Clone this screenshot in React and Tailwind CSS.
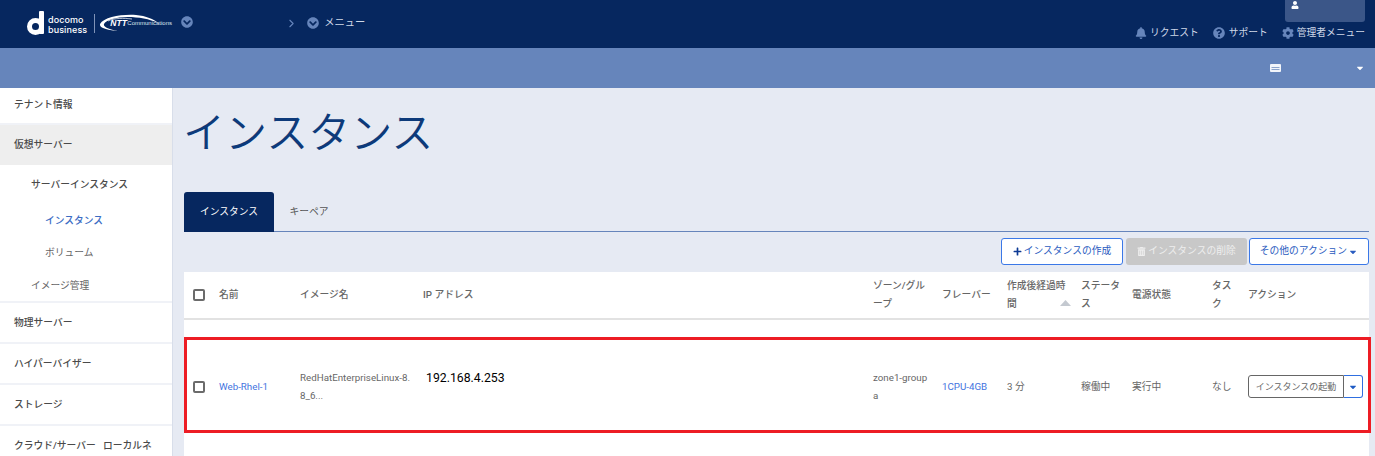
import React from 'react';
import { FaBell, FaCaretDown, FaChevronCircleDown, FaCog, FaPlus, FaQuestionCircle, FaTrashAlt, FaUser } from 'react-icons/fa';
import { FiChevronRight } from 'react-icons/fi';

const Checkbox = () => <span className="block w-[12px] h-[12px] border-2 border-[#6b6b6b] rounded-[2px] bg-white" />;

const Logo = () => (
    <div className="flex items-center">
        <svg width="17" height="24" viewBox="0 0 17 24" className="mr-[3px]">
            <circle cx="8.5" cy="15.5" r="6" fill="none" stroke="#fff" strokeWidth="5" />
            <rect x="12" y="0" width="5" height="23" rx="1" fill="#fff" />
        </svg>
        <div className="flex flex-col text-white text-[9px] font-medium leading-[10px] tracking-[0.1px] font-['Inter',sans-serif] mt-[3px] ml-[1px]">
            <span>docomo</span>
            <span>business</span>
        </div>
        <div className="w-px h-[19px] bg-[#7f93b8] ml-[7px] mr-[5px]" />
        <div className="relative w-[68px] h-[18px]">
            <svg width="68" height="18" viewBox="0 0 68 18" className="absolute inset-0">
                <path d="M0 10C4 3 22 0 36 1C46 2 54 5 58 9C50 5 38 3 28 3C16 3 6 6 4 10C3 13 9 15 18 17C8 16 -1 14 0 10Z" fill="#fff" />
                <path d="M8 7C14 4 24 4 32 5" fill="none" stroke="#fff" strokeWidth="0.7" />
            </svg>
            <span className="absolute left-[10px] top-[4px] text-white text-[8.5px] leading-[10px] font-black italic font-['Liberation_Sans',sans-serif]">NTT</span>
            <span className="absolute left-[27px] top-[5px] text-[#dfe5f0] text-[6px] leading-[9px] font-['Liberation_Sans',sans-serif]">Communications</span>
        </div>
    </div>
);

const Header = () => (
    <header className="h-[48px] bg-[#06275f] flex justify-between pl-[27px] pr-[10px] shrink-0">
        <div className="flex items-start">
            <div className="mt-[11px]"><Logo /></div>
            <FaChevronCircleDown size={12} className="text-[#6685bb] ml-[13px] mt-[16px]" />
            <FiChevronRight size={13} className="text-[#6685bb] ml-[92px] mt-[17px]" />
            <FaChevronCircleDown size={12} className="text-[#6685bb] ml-[9px] mt-[17px]" />
            <span className="text-[10.25px] text-[#cfd8e8] ml-[5px] mt-[15px] leading-[16px]">メニュー</span>
        </div>
        <div className="flex flex-col items-end">
            <div className="w-[80px] h-[22px] bg-[#3b5688] rounded-b-[3px] pl-[6px] pt-[1px]">
                <FaUser size={8} className="text-white" />
            </div>
            <div className="flex items-center mt-[4px] h-[14px] text-[9.75px] text-[#cfd8e8]">
                <FaBell size={12} className="text-[#6685bb] mr-[3px]" />
                <span>リクエスト</span>
                <FaQuestionCircle size={12} className="text-[#6685bb] ml-[14px] mr-[4px]" />
                <span>サポート</span>
                <FaCog size={12} className="text-[#6685bb] ml-[14px] mr-[3px]" />
                <span>管理者メニュー</span>
            </div>
        </div>
    </header>
);

const SubBar = () => (
    <div className="h-[40px] bg-[#6685bb] flex items-center justify-end pr-[10px] shrink-0">
        <svg width="11" height="8" viewBox="0 0 11 8" className="mr-[74px]">
            <rect width="11" height="8" rx="1" fill="#f2f5fa" />
            <rect x="1.5" y="3" width="8" height="1" fill="#8ba3cb" />
            <rect x="1.5" y="5" width="8" height="1" fill="#8ba3cb" />
        </svg>
        <FaCaretDown size={10} className="text-white" />
    </div>
);

const Sidebar = () => (
    <aside className="w-[173px] bg-white border-r border-[#d8deea] shrink-0 text-[9.75px] text-[#4a4a4a] font-medium">
        <div className="h-[37px] pl-[14px] pt-[9px] leading-[16px] border-b-2 border-[#f0f2f7]">テナント情報</div>
        <div className="h-[40px] pl-[14px] pt-[1px] flex items-center bg-[#eeeeee]">仮想サーバー</div>
        <div className="h-[40px] pl-[31px] pt-[1px] flex items-center">サーバーインスタンス</div>
        <div className="h-[30px] pl-[45px] pt-[2px] flex items-center text-[#3b6cc4]">インスタンス</div>
        <div className="h-[36px] pl-[45px] pt-[1px] flex items-center font-normal text-[#666]">ボリューム</div>
        <div className="h-[30px] pl-[31px] flex items-center font-normal text-[#666]">イメージ管理</div>
        <div className="h-[41px] pl-[14px] pt-[2px] flex items-center border-t-2 border-[#f0f2f7]">物理サーバー</div>
        <div className="h-[41px] pl-[14px] pt-[2px] flex items-center border-t-2 border-[#f0f2f7]">ハイパーバイザー</div>
        <div className="h-[41px] pl-[14px] pt-[1px] flex items-center border-t-2 border-[#f0f2f7]">ストレージ</div>
        <div className="h-[41px] pl-[14px] pt-[2px] flex items-center border-t-2 border-[#f0f2f7] whitespace-nowrap">クラウド/サーバー&nbsp;&nbsp;&nbsp;ローカルネ</div>
    </aside>
);

const th = 'text-left font-medium align-middle p-0 pr-[8px] leading-[18px]';
const td = 'align-middle p-0 leading-[18px] pt-[4px]';

const InstanceTable = () => (
    <div className="relative mt-[7px] bg-white h-[200px]">
        <table className="w-full table-fixed border-collapse text-[9.75px] text-[#666]">
            <colgroup>
                <col className="w-[35px]" />
                <col className="w-[81px]" />
                <col className="w-[123px]" />
                <col className="w-[450px]" />
                <col className="w-[69px]" />
                <col className="w-[65px]" />
                <col className="w-[74px]" />
                <col className="w-[51px]" />
                <col className="w-[80px]" />
                <col className="w-[36px]" />
                <col className="w-[121px]" />
            </colgroup>
            <thead>
                <tr className="h-[47px] border-b-2 border-[#e2e2e2]">
                    <th className={th}><div className="pl-[9px]"><Checkbox /></div></th>
                    <th className={th}>名前</th>
                    <th className={th}>イメージ名</th>
                    <th className={th}>IP アドレス</th>
                    <th className={th}>ゾーン/グループ</th>
                    <th className={th}>フレーバー</th>
                    <th className={th}>
                        <div className="relative">
                            作成後経過時間
                            <svg width="11" height="6" viewBox="0 0 11 6" className="absolute right-[2px] bottom-[7px]">
                                <path d="M5.5 0L11 6H0Z" fill="#c4c9d0" />
                            </svg>
                        </div>
                    </th>
                    <th className={th}>ステータス</th>
                    <th className={th}>電源状態</th>
                    <th className={th}>タスク</th>
                    <th className={th}>アクション</th>
                </tr>
            </thead>
            <tbody>
                <tr className="h-[130px]">
                    <td className={td}><div className="pl-[9px]"><Checkbox /></div></td>
                    <td className={`${td} text-[#3f74e0]`}>Web-Rhel-1</td>
                    <td className={td}><div className="break-all pr-[12px]">RedHatEnterpriseLinux-8.8_6...</div></td>
                    <td className={`${td} pl-[3px]`}><div className="text-[12.25px] text-black -mt-[18px]">192.168.4.253</div></td>
                    <td className={td}><div className="break-all pr-[12px]">zone1-group a</div></td>
                    <td className={`${td} text-[#3f74e0]`}>1CPU-4GB</td>
                    <td className={td}>3 分</td>
                    <td className={td}>稼働中</td>
                    <td className={td}>実行中</td>
                    <td className={td}>なし</td>
                    <td className={td}>
                        <div className="flex h-[23px] w-[115px]">
                            <button className="w-[96px] border border-[#666] rounded-l-[3px] text-[#666] text-[9px] whitespace-nowrap">インスタンスの起動</button>
                            <button className="w-[19px] border border-l-0 border-[#2f6fe0] rounded-r-[3px] flex items-center justify-center">
                                <FaCaretDown size={10} className="text-[#1f5bc4]" />
                            </button>
                        </div>
                    </td>
                </tr>
            </tbody>
        </table>
        {/* 赤枠 */}
        <div className="absolute left-0 top-[65px] w-[1187px] h-[96px] border-[3px] border-[#ed1c24] pointer-events-none" />
    </div>
);

const Content = () => (
    <main className="flex-1 min-w-0 bg-[#e6eaf3] pl-[11px] pr-[6px]">
        <h1 className="text-[42px] font-[350] text-[#0d3a7a] leading-[48px] mt-[22px] -mb-[1px] -ml-[1px]">インスタンス</h1>
        <div className="mt-[35px] h-[40px] flex border-b border-[#6685bb] text-[9.75px]">
            <div className="w-[90px] h-[40px] pt-[1px] bg-[#06275f] text-white rounded-t-[3px] flex items-center justify-center">インスタンス</div>
            <div className="w-[70px] pt-[1px] flex items-center justify-center text-[#555]">キーペア</div>
        </div>
        <div className="mt-[6px] flex justify-end gap-[2px] text-[9.75px] h-[27px]">
            <button className="w-[122px] mr-[1px] border border-[#3b78e7] rounded-[3px] bg-white text-[#2a5cc0] flex items-center justify-center gap-[2px] whitespace-nowrap">
                <FaPlus size={9} className="text-[#0d3a94]" />インスタンスの作成
            </button>
            <button className="w-[121px] rounded-[3px] bg-[#c8c8c8] text-[#eeeeee] flex items-center justify-center gap-[2px] whitespace-nowrap">
                <FaTrashAlt size={9} />インスタンスの削除
            </button>
            <button className="w-[120px] border border-[#3b78e7] rounded-[3px] bg-white text-[#2a5cc0] flex items-center justify-center gap-[1px] whitespace-nowrap">
                その他のアクション<FaCaretDown size={10} />
            </button>
        </div>
        <InstanceTable />
    </main>
);

export default function App() {
    return (
        <div className="w-[1375px] h-[456px] overflow-hidden flex flex-col font-['Roboto','Noto_Sans_CJK_JP',sans-serif]">
            <Header />
            <SubBar />
            <div className="flex flex-1 min-h-0">
                <Sidebar />
                <Content />
            </div>
        </div>
    );
}
